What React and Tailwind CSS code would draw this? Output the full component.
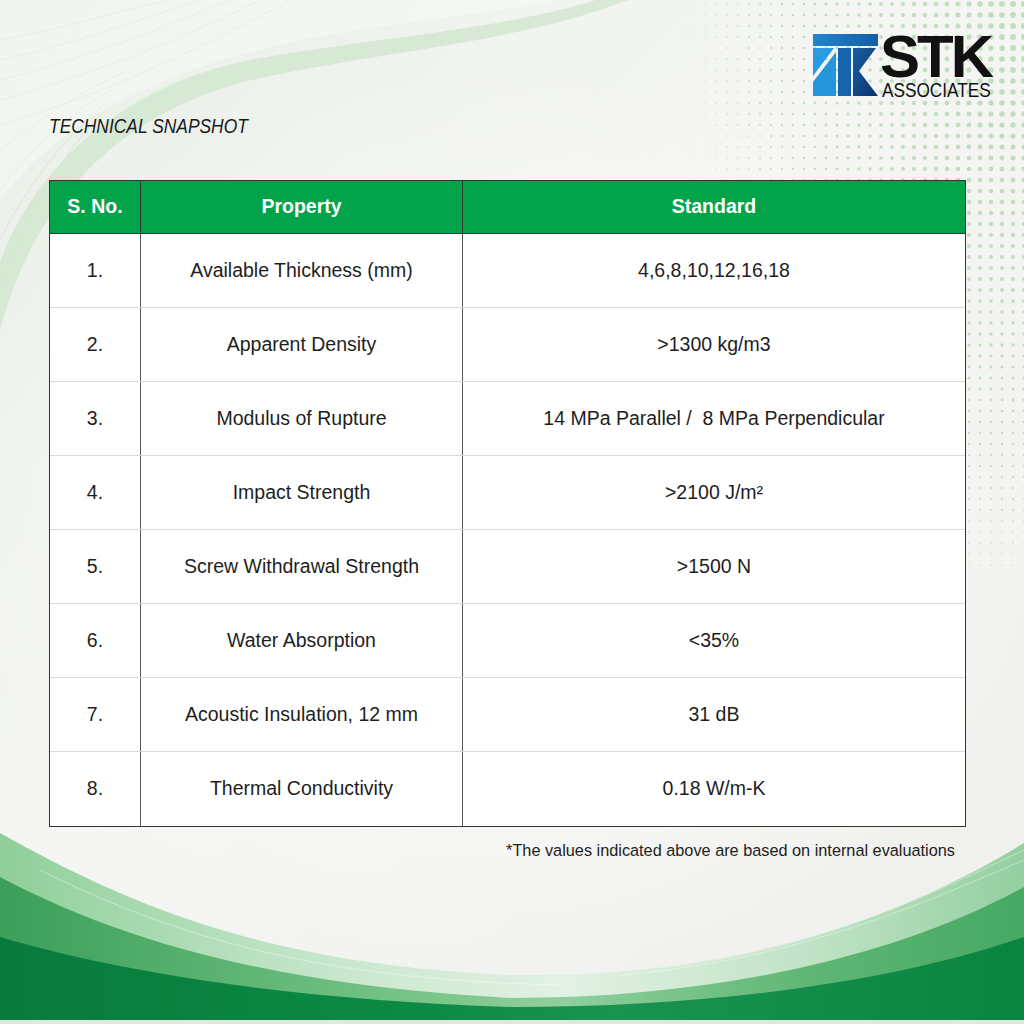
import React from "react";

const rows = [
  ["1.", "Available Thickness (mm)", "4,6,8,10,12,16,18"],
  ["2.", "Apparent Density", ">1300 kg/m3"],
  ["3.", "Modulus of Rupture", "14 MPa Parallel /  8 MPa Perpendicular"],
  ["4.", "Impact Strength", ">2100 J/m²"],
  ["5.", "Screw Withdrawal Strength", ">1500 N"],
  ["6.", "Water Absorption", "<35%"],
  ["7.", "Acoustic Insulation, 12 mm", "31 dB"],
  ["8.", "Thermal Conductivity", "0.18 W/m-K"],
];

function Dots() {
  const out = [];
  for (let y = 4; y < 760; y += 11) {
    for (let x = 540; x < 1030; x += 11) {
      const dx = (1030 - x) / 400;
      const dy = (y - 30) / 680;
      const e = Math.sqrt(dx * dx + dy * dy);
      const r = 3.1 * (1 - e);
      if (r > 0.35) out.push(<circle key={x + "_" + y} cx={x} cy={y} r={r} />);
    }
  }
  return <g fill="#9fcf9c" opacity="0.6">{out}</g>;
}

function Background() {
  return (
    <svg className="absolute inset-0" width="1024" height="1024" viewBox="0 0 1024 1024">
      <defs>
        <linearGradient id="bg" x1="0" y1="0" x2="1" y2="1">
          <stop offset="0" stopColor="#e9efe7" />
          <stop offset="0.45" stopColor="#f5f6f3" />
          <stop offset="1" stopColor="#efefec" />
        </linearGradient>
        <radialGradient id="glow" cx="0.5" cy="0.5" r="0.5">
          <stop offset="0" stopColor="#ffffff" stopOpacity="0.8" />
          <stop offset="1" stopColor="#ffffff" stopOpacity="0" />
        </radialGradient>
        <linearGradient id="lg1" x1="0" y1="0" x2="1" y2="0">
          <stop offset="0" stopColor="#8fcf9a" />
          <stop offset="0.35" stopColor="#cbe8cf" />
          <stop offset="0.55" stopColor="#e2f1e3" />
          <stop offset="0.8" stopColor="#bfe2c4" />
          <stop offset="1" stopColor="#93cfa0" />
        </linearGradient>
        <linearGradient id="lg2" x1="0" y1="0" x2="1" y2="0">
          <stop offset="0" stopColor="#3b9f5a" />
          <stop offset="0.35" stopColor="#6fbf80" />
          <stop offset="0.55" stopColor="#8fcf9c" />
          <stop offset="0.8" stopColor="#5db574" />
          <stop offset="1" stopColor="#45aa63" />
        </linearGradient>
        <linearGradient id="lg3" x1="0" y1="0" x2="1" y2="0">
          <stop offset="0" stopColor="#0a7a3c" />
          <stop offset="0.4" stopColor="#0b8a44" />
          <stop offset="0.6" stopColor="#1a9350" />
          <stop offset="1" stopColor="#0a843f" />
        </linearGradient>
      </defs>
      <rect width="1024" height="1024" fill="url(#bg)" />
      <ellipse cx="500" cy="520" rx="560" ry="460" fill="url(#glow)" />
      <g stroke="#c9d6c6" strokeWidth="0.6" fill="none" opacity="0.7">
        <path d="M0,40 C60,30 120,10 170,0" />
        <path d="M0,60 C70,45 140,20 200,0" />
        <path d="M0,80 C80,60 160,30 230,0" />
        <path d="M0,100 C90,75 180,40 260,0" />
        <path d="M0,125 C100,95 200,50 290,0" />
        <path d="M0,150 C40,120 80,90 130,70" />
        <path d="M0,190 C30,150 70,110 120,85" />
        <path d="M0,240 C25,190 60,140 110,100" />
        <path d="M0,290 C20,230 50,170 100,115" />
      </g>
      <path d="M0,330 C35,200 120,110 260,78 C390,50 520,42 628,0 L596,0 C500,30 370,38 250,60 C110,88 30,180 0,262 Z" fill="#cfe6cc" opacity="0.75" />
      <path d="M0,200 C60,120 160,70 300,40 C420,18 520,10 560,0 L0,0 Z" fill="#ffffff" opacity="0.35" />
      <Dots />
      {/* bottom waves */}
      <path d="M0,833 C120,900 260,965 512,975 C720,978 890,925 1024,843 L1024,1024 L0,1024 Z" fill="url(#lg1)" />
      <g stroke="#ffffff" strokeWidth="0.8" fill="none" opacity="0.5">
        <path d="M40,870 C200,950 350,980 560,985" />
        <path d="M620,975 C800,960 930,900 1024,860" />
        <path d="M660,968 C820,950 940,890 1024,850" />
      </g>
      <path d="M0,877 C110,935 260,985 512,998 C720,998 900,955 1024,887 L1024,1024 L0,1024 Z" fill="url(#lg2)" />
      <path d="M0,937 C130,975 300,1000 512,1007 C720,1007 900,980 1024,937 L1024,1024 L0,1024 Z" fill="url(#lg3)" />
      <rect x="0" y="1020" width="1024" height="4" fill="#dfe7df" />
    </svg>
  );
}

function Logo() {
  return (
    <div className="flex items-start gap-[2px]">
      <svg width="65" height="62" viewBox="0 0 65 62">
        <defs>
          <linearGradient id="tb" x1="0" y1="0" x2="1" y2="0">
            <stop offset="0" stopColor="#1f86cf" />
            <stop offset="1" stopColor="#145ea6" />
          </linearGradient>
          <linearGradient id="rk" x1="0" y1="0" x2="1" y2="1">
            <stop offset="0" stopColor="#1a5da0" />
            <stop offset="1" stopColor="#0c3570" />
          </linearGradient>
        </defs>
        <rect x="0" y="0" width="65" height="12" fill="url(#tb)" />
        <polygon points="0,14 21,14 0,42" fill="#2a9be0" />
        <polygon points="23,18 23,62 0,62 0,48" fill="#2596dc" />
        <rect x="25" y="14" width="13" height="48" fill="#1664ad" />
        <polygon points="40,14 63,14 46,37 65,62 40,62" fill="url(#rk)" />
      </svg>
      <div className="flex flex-col">
        <div className="text-[60px] leading-[44px] font-bold tracking-[-3px] text-[#111] mt-[1px]">STK</div>
        <div className="w-[110px] mt-[3px] ml-[2px] h-[16px]">
          <div className="text-[21px] leading-[16px] text-[#111] origin-left scale-x-[0.82] whitespace-nowrap">ASSOCIATES</div>
        </div>
      </div>
    </div>
  );
}

export default function App() {
  return (
    <div
      className="relative w-[1024px] h-[1024px] overflow-hidden"
      style={{ fontFamily: '"Liberation Sans", Arial, sans-serif' }}
    >
      <Background />
      <div className="relative flex flex-col pl-[49px]">
        <div className="flex justify-end pt-[34px] pr-[32px]">
          <Logo />
        </div>
        <div className="mt-[17px] h-[22px] w-[200px]">
          <div className="text-[20px] leading-[22px] italic text-[#1a1a1a] origin-left scale-x-[0.87] whitespace-nowrap">TECHNICAL SNAPSHOT</div>
        </div>
        <div className="mt-[43px] w-[917px] border-[1.5px] border-[#333] bg-white">
          <div className="grid grid-cols-[91px_322px_1fr] h-[53px] bg-[#03a34c] border-b-[1.5px] border-[#333] text-white font-bold text-[19.5px]">
            <div className="flex items-center justify-center border-r border-[#2f3b33]">S. No.</div>
            <div className="flex items-center justify-center border-r border-[#2f3b33]">Property</div>
            <div className="flex items-center justify-center">Standard</div>
          </div>
          {rows.map((r, i) => (
            <div
              key={i}
              className={
                "grid grid-cols-[91px_322px_1fr] h-[74px] text-[19.5px] text-[#1e1e1e] " +
                (i < rows.length - 1 ? "border-b border-[#d9d9d9]" : "")
              }
            >
              <div className="flex items-center justify-center border-r border-[#555]">{r[0]}</div>
              <div className="flex items-center justify-center border-r border-[#555]">{r[1]}</div>
              <div className="flex items-center justify-center whitespace-pre">{r[2]}</div>
            </div>
          ))}
        </div>
        <div className="mt-[13px] w-[906px] text-right text-[16.3px] leading-[20px] text-[#1e1e1e]">
          *The values indicated above are based on internal evaluations
        </div>
      </div>
    </div>
  );
}
